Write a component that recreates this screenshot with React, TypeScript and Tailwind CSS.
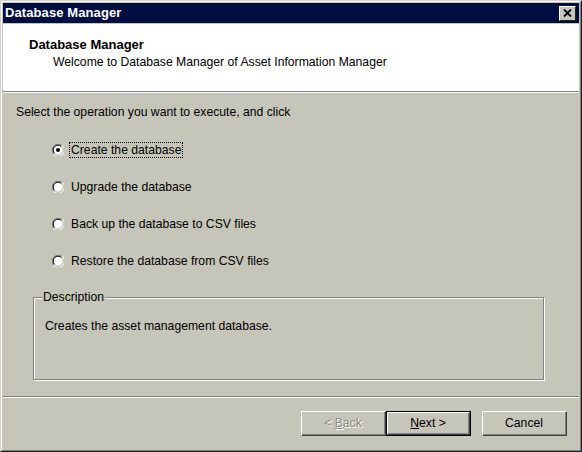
import React from "react";

function Radio({ checked }: { checked?: boolean }) {
  return (
    <svg width="12" height="12" viewBox="0 0 12 12" className="shrink-0">
      <circle cx="6" cy="6" r="5" fill="#ffffff" />
      <path d="M1.76 10.24 A6 6 0 0 1 10.24 1.76" fill="none" stroke="#808080" strokeWidth="1" />
      <path d="M10.6 1.4 A6.3 6.3 0 0 1 1.4 10.6" fill="none" stroke="#ffffff" strokeWidth="1" />
      <path d="M2.6 9.4 A4.8 4.8 0 0 1 9.4 2.6" fill="none" stroke="#000000" strokeWidth="1" />
      <path d="M9.4 2.6 A4.8 4.8 0 0 1 2.6 9.4" fill="none" stroke="#d4d0c8" strokeWidth="1" />
      {checked && <circle cx="6" cy="6" r="2" fill="#000" />}
    </svg>
  );
}

function Btn({ children, def, disabled }: { children: React.ReactNode; def?: boolean; disabled?: boolean }) {
  return (
    <div className={`h-[25px] w-[85px] ${def ? "border border-black" : ""}`}>
      <div className="h-full w-full border-t border-l border-t-white border-l-white border-b border-r border-b-[#404040] border-r-[#404040]">
        <div className="h-full w-full border-b border-r border-b-[#808080] border-r-[#808080] flex items-center justify-center">
          {disabled ? (
            <span className="text-[#8a8a80] [text-shadow:1px_1px_0_#ffffff]">{children}</span>
          ) : (
            <span className="text-black">{children}</span>
          )}
        </div>
      </div>
    </div>
  );
}

export default function App() {
  const opts = [
    "Create the database",
    "Upgrade the database",
    "Back up the database to CSV files",
    "Restore the database from CSV files",
  ];
  return (
    <div
      className="w-[582px] h-[452px] bg-[#c6c5b9] text-[12.2px] text-black"
      style={{ fontFamily: '"Liberation Sans", Arial, sans-serif' }}
    >
      <div className="w-full h-full border-t border-l border-t-[#d4d0c8] border-l-[#d4d0c8] border-b border-r border-b-[#202020] border-r-[#202020]">
        <div className="w-full h-full border-t border-l border-t-white border-l-white border-b border-r border-b-[#808080] border-r-[#808080] p-[1px] flex flex-col">
          {/* title bar */}
          <div className="h-[20px] bg-[#000d40] flex items-center justify-between pl-[2px] pr-[3px]">
            <span className="text-white font-bold text-[13px] tracking-[0.1px]">Database Manager</span>
            <div className="w-[17px] h-[15px] bg-[#c6c5b9] border-t border-l border-t-white border-l-white border-b border-r border-b-[#202020] border-r-[#202020] flex items-center justify-center">
              <svg width="9" height="8" viewBox="0 0 9 8">
                <path d="M1 0.5 L8 7.5 M8 0.5 L1 7.5" stroke="#000" strokeWidth="1.8" />
              </svg>
            </div>
          </div>
          {/* header */}
          <div className="mt-[1px] h-[67px] bg-white pl-[26px] pt-[13px]">
            <div className="font-bold text-[13px] leading-[16px]">Database Manager</div>
            <div className="pl-[24px] leading-[16px] mt-[1px]">Welcome to Database Manager of Asset Information Manager</div>
          </div>
          <div className="h-[1px] bg-[#808080]" />
          <div className="h-[1px] bg-white" />
          {/* body */}
          <div className="flex-1 flex flex-col">
            <div className="pl-[13px] pt-[12px] leading-[14px]">Select the operation you want to execute, and click</div>
            <div className="flex flex-col pl-[49px] mt-[25px] gap-[25px]">
              {opts.map((o, i) => (
                <div key={o} className="flex items-center h-[12px] gap-[6px]">
                  <Radio checked={i === 0} />
                  <span
                    className={`leading-[14px] px-[1px] ${i === 0 ? "outline outline-1 outline-dotted outline-black" : ""}`}
                  >
                    {o}
                  </span>
                </div>
              ))}
            </div>
            {/* group box */}
            <div className="ml-[30px] mt-[30px] w-[511px] h-[83px] relative border border-[#808080] shadow-[1px_1px_0_#ffffff,inset_1px_1px_0_#ffffff]">
              <span className="absolute -top-[8px] left-[8px] bg-[#c6c5b9] px-[1px] leading-[14px]">Description</span>
              <div className="pl-[11px] pt-[21px] leading-[14px]">Creates the asset management database.</div>
            </div>
            <div className="mt-[16px] h-[1px] bg-[#808080]" />
            <div className="h-[1px] bg-white" />
            <div className="flex justify-end pr-[12px] mt-[13px]">
              <Btn disabled>
                &lt; <span className="underline">B</span>ack
              </Btn>
              <Btn def>
                <span className="underline">N</span>ext &gt;
              </Btn>
              <div className="w-[11px]" />
              <Btn>Cancel</Btn>
            </div>
          </div>
        </div>
      </div>
    </div>
  );
}
